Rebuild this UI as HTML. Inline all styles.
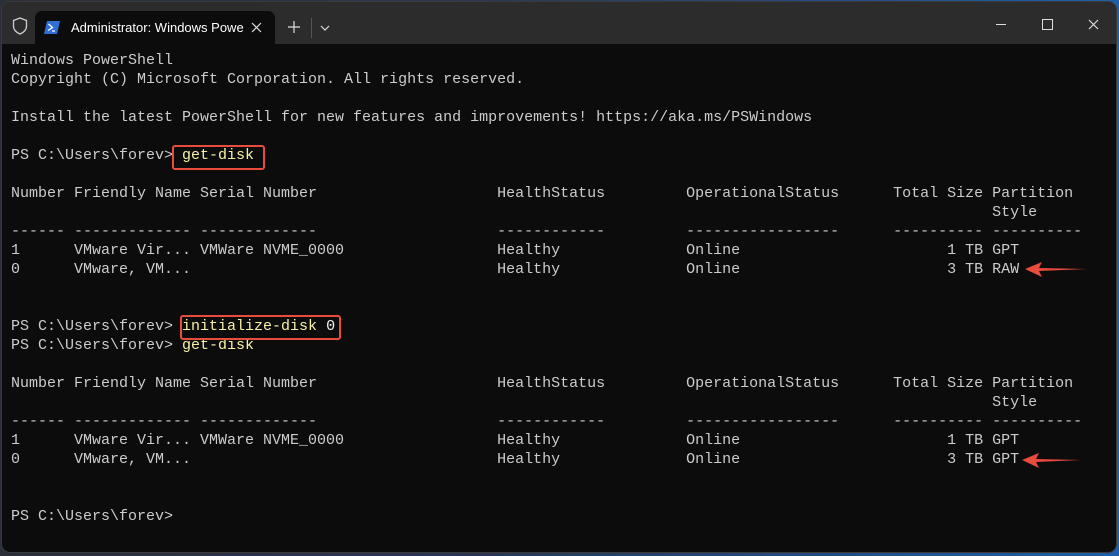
<!DOCTYPE html>
<html><head><meta charset="utf-8"><style>
body{margin:0;width:1119px;height:556px;overflow:hidden;background:linear-gradient(90deg,#2a2f3a 0%,#2a3550 40%,#1d5fa8 100%);position:relative;font-family:"Liberation Sans",sans-serif}
.win{position:absolute;left:2px;top:2px;width:1114px;height:550px;background:#0c0c0c;border-radius:8px;overflow:hidden;box-shadow:0 0 0 1px #3a3a3a}
.bar{position:absolute;left:0;top:0;width:100%;height:42px;background:#2c2c2c}
.tab{position:absolute;left:33px;top:9px;width:240px;height:33px;background:#0c0c0c;border-radius:7px 7px 0 0}
.tt{position:absolute;left:36px;top:9px;color:#fff;font-size:13px}
pre{position:absolute;left:9px;top:49px;margin:0;font-family:"Liberation Mono",monospace;font-size:15px;line-height:19px;color:#cccccc}
.y{color:#f9f1a5}.w{color:#f2f2f2}
.box{position:absolute;border:2px solid #e84c3d;border-radius:3px}
</style></head><body>
<div class="win">
<div class="bar">
<svg style="position:absolute;left:10px;top:15px" width="16" height="18" viewBox="0 0 16 18"><path d="M8 1 L14.5 3.5 V9 C14.5 13 11.5 15.5 8 17 C4.5 15.5 1.5 13 1.5 9 V3.5 Z" fill="none" stroke="#ccc" stroke-width="1.3"/></svg>
<div class="tab">
<svg style="position:absolute;left:9px;top:10px" width="16" height="13" viewBox="0 0 16 13"><path d="M3 0H16L13 13H0Z" fill="#2f6fd6"/><path d="M4.5 3L8.5 6.5 4 9.5" stroke="#fff" stroke-width="1.3" fill="none"/><path d="M8 10H11" stroke="#fff" stroke-width="1.2"/></svg>
<div class="tt">Administrator: Windows Powe</div>
<svg style="position:absolute;left:216px;top:11px" width="11" height="11"><path d="M1 1L10 10M10 1L1 10" stroke="#ddd" stroke-width="1.2"/></svg>
</div>
<svg style="position:absolute;left:286px;top:19px" width="12" height="12"><path d="M6 0V12M0 6H12" stroke="#ddd" stroke-width="1.2"/></svg>
<div style="position:absolute;left:309px;top:16px;width:1px;height:20px;background:#555"></div>
<svg style="position:absolute;left:318px;top:23px" width="10" height="6"><path d="M1 1L5 5 9 1" stroke="#ddd" stroke-width="1.2" fill="none"/></svg>
<div style="position:absolute;left:994px;top:22px;width:10px;height:1px;background:#ddd"></div>
<div style="position:absolute;left:1040px;top:17px;width:9px;height:9px;border:1px solid #ddd"></div>
<svg style="position:absolute;left:1086px;top:17px" width="11" height="11"><path d="M1 1L10 10M10 1L1 10" stroke="#ddd" stroke-width="1.2"/></svg>
</div>
<pre>Windows PowerShell
Copyright (C) Microsoft Corporation. All rights reserved.

Install the latest PowerShell for new features and improvements! https://aka.ms/PSWindows

PS C:\Users\forev&gt; <span class="y">get-disk</span>

Number Friendly Name Serial Number                    HealthStatus         OperationalStatus      Total Size Partition
                                                                                                             Style
------ ------------- -------------                    ------------         -----------------      ---------- ----------
1      VMware Vir... VMWare NVME_0000                 Healthy              Online                       1 TB GPT
0      VMware, VM...                                  Healthy              Online                       3 TB RAW


PS C:\Users\forev&gt; <span class="y">initialize-disk</span> <span class="w">0</span>
PS C:\Users\forev&gt; <span class="y">get-disk</span>

Number Friendly Name Serial Number                    HealthStatus         OperationalStatus      Total Size Partition
                                                                                                             Style
------ ------------- -------------                    ------------         -----------------      ---------- ----------
1      VMware Vir... VMWare NVME_0000                 Healthy              Online                       1 TB GPT
0      VMware, VM...                                  Healthy              Online                       3 TB GPT


PS C:\Users\forev&gt;</pre>
<div class="box" style="left:170px;top:143px;width:89px;height:21px"></div>
<div class="box" style="left:178px;top:313px;width:157px;height:21px"></div>
<svg style="position:absolute;left:1020px;top:258px" width="70" height="20"><path d="M3 9 L20 2 L17 8 L64 9 L17 11 L20 17 Z" fill="#e84c3d"/></svg>
<svg style="position:absolute;left:1017px;top:449px" width="70" height="20"><path d="M3 9 L20 2 L17 8 L62 9 L17 11 L20 17 Z" fill="#e84c3d"/></svg>
</div>
</body></html>
